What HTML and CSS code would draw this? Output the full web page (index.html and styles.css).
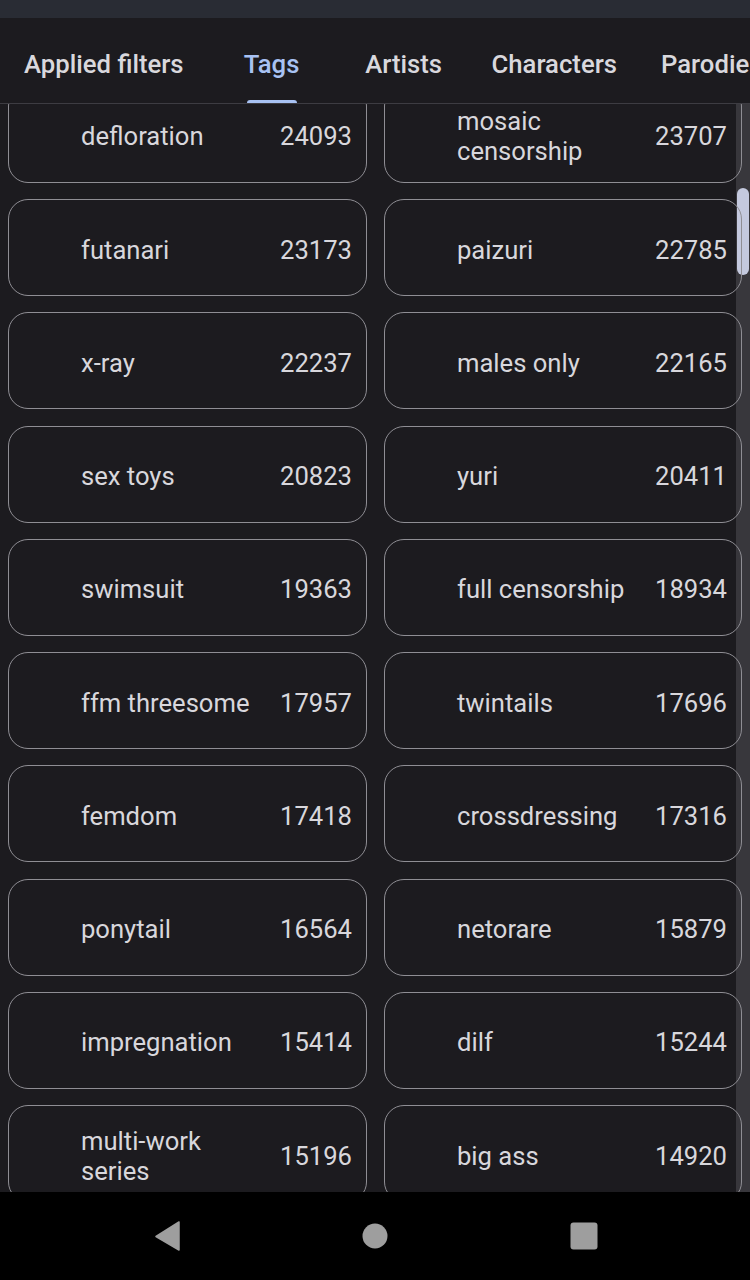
FILE: index.html
```html
<!DOCTYPE html>
<html>
<head>
<meta charset="utf-8">
<link rel="stylesheet" href="styles.css">
</head>
<body>
<div class="screen">
  <div class="statusbar"></div>
  <div class="tabbar">
    <div class="tab">Applied filters</div>
    <div class="tab active">Tags<span class="indicator"></span></div>
    <div class="tab">Artists</div>
    <div class="tab">Characters</div>
    <div class="tab">Parodies</div>
  </div>
  <div class="list">
    <div class="grid">
      <div class="card"><span class="label">defloration</span><span class="count">24093</span></div>
      <div class="card"><span class="label">mosaic censorship</span><span class="count">23707</span></div>
      <div class="card"><span class="label">futanari</span><span class="count">23173</span></div>
      <div class="card"><span class="label">paizuri</span><span class="count">22785</span></div>
      <div class="card"><span class="label">x-ray</span><span class="count">22237</span></div>
      <div class="card"><span class="label">males only</span><span class="count">22165</span></div>
      <div class="card"><span class="label">sex toys</span><span class="count">20823</span></div>
      <div class="card"><span class="label">yuri</span><span class="count">20411</span></div>
      <div class="card"><span class="label">swimsuit</span><span class="count">19363</span></div>
      <div class="card"><span class="label">full censorship</span><span class="count">18934</span></div>
      <div class="card"><span class="label">ffm threesome</span><span class="count">17957</span></div>
      <div class="card"><span class="label">twintails</span><span class="count">17696</span></div>
      <div class="card"><span class="label">femdom</span><span class="count">17418</span></div>
      <div class="card"><span class="label">crossdressing</span><span class="count">17316</span></div>
      <div class="card"><span class="label">ponytail</span><span class="count">16564</span></div>
      <div class="card"><span class="label">netorare</span><span class="count">15879</span></div>
      <div class="card"><span class="label">impregnation</span><span class="count">15414</span></div>
      <div class="card"><span class="label">dilf</span><span class="count">15244</span></div>
      <div class="card"><span class="label">multi-work series</span><span class="count">15196</span></div>
      <div class="card"><span class="label">big ass</span><span class="count">14920</span></div>
    </div>
    <div class="scrolltrack"><div class="thumb"></div></div>
  </div>
  <div class="navbar">
    <svg class="nav-back" width="26" height="30" viewBox="0 0 26 30"><path d="M25 1 L25 29 L2 15.5 Z" fill="#9e9e9e" stroke="#9e9e9e" stroke-width="1.5" stroke-linejoin="round"/></svg>
    <svg class="nav-home" width="26" height="26" viewBox="0 0 26 26"><circle cx="13" cy="13" r="12.5" fill="#9e9e9e"/></svg>
    <svg class="nav-recent" width="28" height="28" viewBox="0 0 28 28"><rect x="0.5" y="0.5" width="27" height="27" rx="3" fill="#9e9e9e"/></svg>
  </div>
</div>
</body>
</html>
```
FILE: styles.css
```css
html, body {
  margin: 0;
  padding: 0;
  background: #1c1b1f;
}
body {
  font-family: Roboto, "Noto Sans", sans-serif;
  color: #dedde2;
}
.screen {
  width: 750px;
  height: 1280px;
  display: flex;
  flex-direction: column;
  overflow: hidden;
}
.statusbar {
  height: 18px;
  background: #292c34;
  flex: none;
}
.tabbar {
  height: 85px;
  flex: none;
  display: flex;
  align-items: stretch;
  padding-left: 2px;
  border-bottom: 1px solid #3d3c42;
  background: #1c1b1f;
  white-space: nowrap;
  overflow: hidden;
}
.tab {
  position: relative;
  flex: none;
  min-width: 132px;
  box-sizing: border-box;
  padding: 6px 22px 0;
  display: flex;
  align-items: center;
  justify-content: center;
  font-size: 25.7px;
  font-weight: 500;
  color: #d9d8dd;
}
.tab.active {
  color: #a8c2f3;
}
.indicator {
  position: absolute;
  bottom: 0;
  left: 50%;
  width: 50px;
  margin-left: -25px;
  height: 3px;
  border-radius: 3px 3px 0 0;
  background: #a8c2f3;
}
.list {
  position: relative;
  flex: 1;
  overflow: hidden;
}
.grid {
  position: relative;
  z-index: 1;
  display: grid;
  grid-template-columns: 359px 358px;
  column-gap: 17px;
  row-gap: 16.25px;
  padding-left: 8px;
  margin-top: -18.25px;
}
.card {
  height: 97px;
  box-sizing: border-box;
  border: 1.6px solid #8f8e94;
  border-radius: 20px;
  display: flex;
  align-items: center;
  padding: 4px 14px 0 72px;
  font-size: 25.6px;
  color: #d8d7dc;
}
.label {
  flex: 1;
  line-height: 30px;
  padding-right: 16px;
}
.count {
  flex: none;
}
.scrolltrack {
  position: absolute;
  z-index: 0;
  top: 0;
  bottom: 0;
  right: 0;
  width: 14px;
  background: #38373c;
}
.thumb {
  position: absolute;
  top: 84px;
  left: 1px;
  width: 12px;
  height: 87px;
  border-radius: 6px;
  background: #c4c9de;
}
.navbar {
  height: 88px;
  flex: none;
  background: #000;
  display: flex;
  align-items: center;
  justify-content: center;
  gap: 182px;
  padding-left: 2px;
}
.navbar svg {
  display: block;
}
```
